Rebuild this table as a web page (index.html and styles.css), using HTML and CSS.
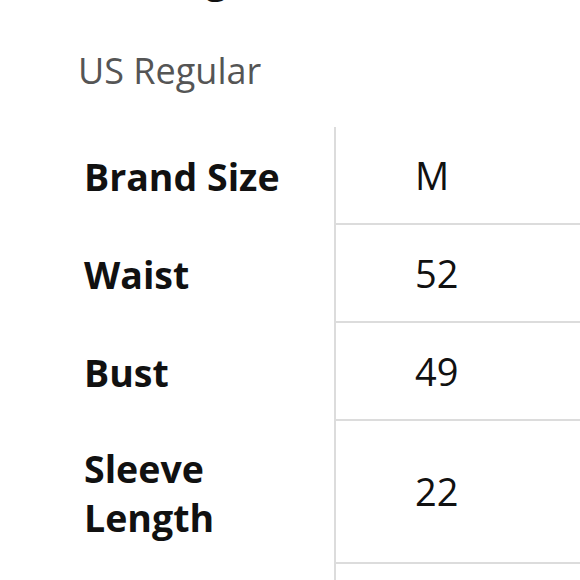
FILE: index.html
```html
<!DOCTYPE html>
<html>
<head>
<meta charset="utf-8">
<link rel="stylesheet" href="styles.css">
</head>
<body>
<div class="page">
  <div class="heading">Sizing</div>
  <div class="subtitle">US Regular</div>
  <div class="table">
    <div class="row"><div class="label">Brand Size</div><div class="value">M</div></div>
    <div class="row"><div class="label">Waist</div><div class="value">52</div></div>
    <div class="row"><div class="label">Bust</div><div class="value">49</div></div>
    <div class="row"><div class="label">Sleeve<br>Length</div><div class="value">22</div></div>
    <div class="row"><div class="label">Length</div><div class="value">28</div></div>
  </div>
</div>
</body>
</html>
```
FILE: styles.css
```css
html, body {
  margin: 0;
  padding: 0;
  background: #fff;
}
body {
  font-family: "Open Sans", "Noto Sans", sans-serif;
  color: #111;
  overflow: hidden;
}
.page {
  padding-left: 78px;
}
.heading {
  margin-top: -47px;
  margin-left: 40px;
  height: 50px;
  font-size: 38px;
  line-height: 50px;
  font-weight: 700;
  color: #111;
}
.subtitle {
  margin-top: 48px;
  font-size: 36px;
  line-height: 40px;
  color: #555;
}
.table {
  margin-top: 36px;
  margin-left: 6px;
  display: flex;
  flex-direction: column;
}
.row {
  display: grid;
  grid-template-columns: 250px 1fr;
}
.label {
  font-size: 37.5px;
  font-weight: 700;
  line-height: 49px;
  padding: 24.5px 0;
  display: flex;
  align-items: center;
  min-height: 49px;
}
.row:nth-child(4) .label {
  padding: 22.5px 0;
}
.value {
  border-left: 2px solid #dcdcdc;
  border-bottom: 2px solid #dcdcdc;
  font-size: 38px;
  line-height: 49px;
  padding-left: 79px;
  display: flex;
  align-items: center;
}
```
